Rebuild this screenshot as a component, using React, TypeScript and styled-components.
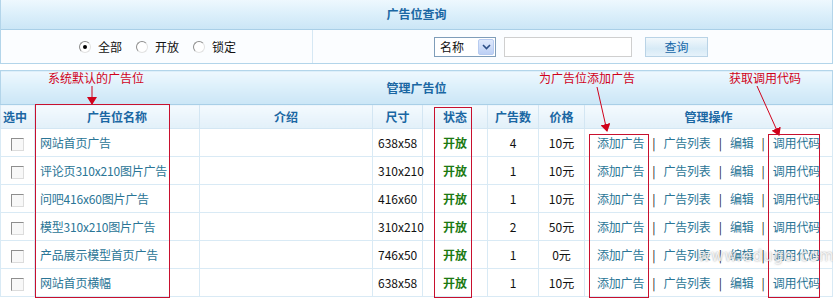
import React from "react";
import styled, { createGlobalStyle } from "styled-components";

const GlobalStyle = createGlobalStyle`
	html, body {
		margin: 0;
		padding: 0;
		background: #ffffff;
	}
	body {
		font-family: "Noto Sans CJK SC", "DejaVu Sans", sans-serif;
		font-size: 12px;
		color: #222;
	}
`;

type AdSlot = {
	name: string;
	size: string;
	count: number;
	price: string;
};

const slots: AdSlot[] = [
	{ name: "网站首页广告", size: "638x58", count: 4, price: "10元" },
	{ name: "评论页310x210图片广告", size: "310x210", count: 1, price: "10元" },
	{ name: "问吧416x60图片广告", size: "416x60", count: 1, price: "10元" },
	{ name: "模型310x210图片广告", size: "310x210", count: 2, price: "50元" },
	{ name: "产品展示模型首页广告", size: "746x50", count: 1, price: "0元" },
	{ name: "网站首页横幅", size: "638x58", count: 1, price: "10元" },
];

const App = () => {
	return (
		<Page>
			<GlobalStyle />
			<SearchPanel>
				<PanelTitle>广告位查询</PanelTitle>
				<SearchRow>
					<FilterCell>
						<RadioItem>
							<Radio checked />
							全部
						</RadioItem>
						<RadioItem>
							<Radio />
							开放
						</RadioItem>
						<RadioItem>
							<Radio />
							锁定
						</RadioItem>
					</FilterCell>
					<QueryCell>
						<Select>
							<span>名称</span>
							<SelectArrow>
								<svg width="9" height="6" viewBox="0 0 9 6">
									<path d="M1 1 L4.5 4.5 L8 1" stroke="#2d4f86" strokeWidth="1.6" fill="none" />
								</svg>
							</SelectArrow>
						</Select>
						<TextBox />
						<QueryButton>查询</QueryButton>
					</QueryCell>
				</SearchRow>
			</SearchPanel>

			<Grid>
				<colgroup>
					<col style={{ width: 34 }} />
					<col style={{ width: 165 }} />
					<col style={{ width: 173 }} />
					<col style={{ width: 50 }} />
					<col style={{ width: 65 }} />
					<col style={{ width: 51 }} />
					<col style={{ width: 46 }} />
					<col />
				</colgroup>
				<thead>
					<tr>
						<TitleCell colSpan={8}>管理广告位</TitleCell>
					</tr>
					<tr>
						<HeadCell align="left">选中</HeadCell>
						<HeadCell>广告位名称</HeadCell>
						<HeadCell>介绍</HeadCell>
						<HeadCell>尺寸</HeadCell>
						<HeadCell>状态</HeadCell>
						<HeadCell>广告数</HeadCell>
						<HeadCell>价格</HeadCell>
						<HeadCell>管理操作</HeadCell>
					</tr>
				</thead>
				<tbody>
					{slots.map((s, i) => (
						<tr key={i}>
							<Cell align="center">
								<CheckBox />
							</Cell>
							<Cell>
								<Link>{s.name}</Link>
							</Cell>
							<Cell />
							<Cell align="center">{s.size}</Cell>
							<Cell align="center">
								<Status>开放</Status>
							</Cell>
							<Cell align="center">{s.count}</Cell>
							<Cell align="center">{s.price}</Cell>
							<Cell align="center">
								<Link>添加广告</Link>
								<Sep>|</Sep>
								<Link>广告列表</Link>
								<Sep>|</Sep>
								<Link>编辑</Link>
								<Sep>|</Sep>
								<Link>调用代码</Link>
							</Cell>
						</tr>
					))}
				</tbody>
			</Grid>

			{/* red annotations drawn over the screenshot */}
			<Note style={{ left: 48, top: 70 }}>系统默认的广告位</Note>
			<Note style={{ left: 539, top: 70 }}>为广告位添加广告</Note>
			<Note style={{ left: 729, top: 70 }}>获取调用代码</Note>
			<Arrows width="833" height="298" viewBox="0 0 833 298">
				<defs>
					<marker id="head" markerWidth="8" markerHeight="10" refX="7" refY="5" orient="auto" markerUnits="userSpaceOnUse">
						<path d="M0 0 L8 5 L0 10 Z" fill="#d0021b" />
					</marker>
				</defs>
				<line x1="92" y1="86" x2="92" y2="104" stroke="#d0021b" strokeWidth="1" markerEnd="url(#head)" />
				<line x1="597" y1="87" x2="607" y2="131" stroke="#d0021b" strokeWidth="1" markerEnd="url(#head)" />
				<line x1="757" y1="86" x2="779" y2="135" stroke="#d0021b" strokeWidth="1" markerEnd="url(#head)" />
			</Arrows>
			<Frame style={{ left: 35, top: 104, width: 133, height: 192 }} />
			<Frame style={{ left: 434, top: 107, width: 36, height: 189 }} />
			<Frame style={{ left: 589, top: 134, width: 58, height: 162 }} />
			<Frame style={{ left: 768, top: 134, width: 50, height: 162 }} />
			<Watermark>www.edugo.com</Watermark>
		</Page>
	);
};

export default App;

const Page = styled.div`
	position: relative;
	width: 833px;
	height: 298px;
	overflow: hidden;
`;

const SearchPanel = styled.div`
	border: 1px solid #b3d5ea;
	border-top: none;
	margin-bottom: 6px;
`;

const PanelTitle = styled.div`
	height: 29px;
	line-height: 27px;
	text-align: center;
	font-weight: bold;
	color: #1a67a3;
	background: linear-gradient(#eef8fe 0%, #ddf0fb 45%, #cbe6f6 100%);
	border-bottom: 1px solid #a9cfe7;
`;

const SearchRow = styled.div`
	display: flex;
	height: 33px;
	background: #fbfdff;
`;

const FilterCell = styled.div`
	width: 312px;
	display: flex;
	align-items: center;
	justify-content: center;
	gap: 14px;
	border-right: 1px solid #d6e8f4;
	padding-left: 2px;
	box-sizing: border-box;
`;

const RadioItem = styled.label`
	display: flex;
	align-items: center;
	gap: 7px;
	color: #111;
`;

const Radio = styled.span<{ checked?: boolean }>`
	position: relative;
	width: 10px;
	height: 10px;
	border-radius: 50%;
	border: 1px solid #8d8d8d;
	border-bottom-color: #e2e2e2;
	border-right-color: #e2e2e2;
	background: #fff;
	&::after {
		content: "";
		display: ${(p) => (p.checked ? "block" : "none")};
		position: absolute;
		left: 3px;
		top: 3px;
		width: 4px;
		height: 4px;
		border-radius: 50%;
		background: #000;
	}
`;

const QueryCell = styled.div`
	flex: 1;
	display: flex;
	align-items: center;
	justify-content: center;
	padding-right: 3px;
`;

const Select = styled.div`
	width: 62px;
	height: 20px;
	box-sizing: border-box;
	border: 1px solid #7f9db9;
	background: #fff;
	display: flex;
	align-items: center;
	justify-content: space-between;
	padding: 0 1px 0 5px;
	color: #111;
	margin-right: 8px;
`;

const SelectArrow = styled.span`
	width: 16px;
	height: 16px;
	border: 1px solid #b7cbf0;
	border-radius: 2px;
	box-sizing: border-box;
	background: linear-gradient(#dfe9fc, #bdd0f5);
	display: flex;
	align-items: center;
	justify-content: center;
`;

const TextBox = styled.div`
	width: 128px;
	height: 20px;
	box-sizing: border-box;
	border: 1px solid #cfcfcf;
	background: #fff;
	margin-right: 13px;
`;

const QueryButton = styled.div`
	width: 63px;
	height: 20px;
	box-sizing: border-box;
	border: 1px solid #b9d3e6;
	background: linear-gradient(#f2f8fc, #d7eaf6 60%, #e6f2fa);
	color: #1667a8;
	text-align: center;
	line-height: 18px;
`;

const Grid = styled.table`
	width: 833px;
	table-layout: fixed;
	border-collapse: collapse;
	border-left: 1px solid #b3d5ea;
	border-right: 1px solid #b3d5ea;
	box-sizing: border-box;
`;

const TitleCell = styled.th`
	height: 32px;
	padding: 0 0 1px;
	font-weight: bold;
	color: #1a67a3;
	background: linear-gradient(#eef8fe 0%, #ddf0fb 45%, #cbe6f6 100%);
	border-top: 1px solid #b3d5ea;
	border-bottom: 1px solid #a9cfe7;
`;

const HeadCell = styled.th<{ align?: string }>`
	height: 23px;
	padding: 0 2px;
	text-align: ${(p) => p.align || "center"};
	font-weight: bold;
	color: #1a67a3;
	background: linear-gradient(#f4fafe, #e2f0f9);
	border: 1px solid #d3e6f3;
	border-top: none;
`;

const Cell = styled.td<{ align?: string }>`
	height: 27px;
	padding: 0 5px;
	text-align: ${(p) => p.align || "left"};
	border: 1px solid #d9eaf5;
	white-space: nowrap;
	color: #111;
	background: #fff;
`;

const CheckBox = styled.span`
	display: inline-block;
	width: 11px;
	height: 11px;
	vertical-align: middle;
	border: 1px solid #8e8e8e;
	border-bottom-color: #dcdcdc;
	border-right-color: #dcdcdc;
	background: #f8f8f8;
`;

const Link = styled.span`
	color: #2a7596;
	letter-spacing: -0.2px;
`;

const Status = styled.span`
	font-weight: bold;
	color: #1c7a12;
`;

const Sep = styled.span`
	display: inline-block;
	margin: 0 8px;
	color: #222;
`;

const Note = styled.div`
	position: absolute;
	color: #d0021b;
	font-size: 12px;
	line-height: 16px;
	white-space: nowrap;
`;

const Arrows = styled.svg`
	position: absolute;
	left: 0;
	top: 0;
	pointer-events: none;
`;

const Frame = styled.div`
	position: absolute;
	border: 1px solid #c8102e;
	pointer-events: none;
`;

const Watermark = styled.div`
	position: absolute;
	left: 698px;
	top: 247px;
	font-family: "DejaVu Sans", sans-serif;
	font-size: 15px;
	letter-spacing: 1px;
	color: rgba(255, 255, 255, 0.8);
	text-shadow: 0 0 2px rgba(110, 110, 110, 0.7);
	pointer-events: none;
`;
